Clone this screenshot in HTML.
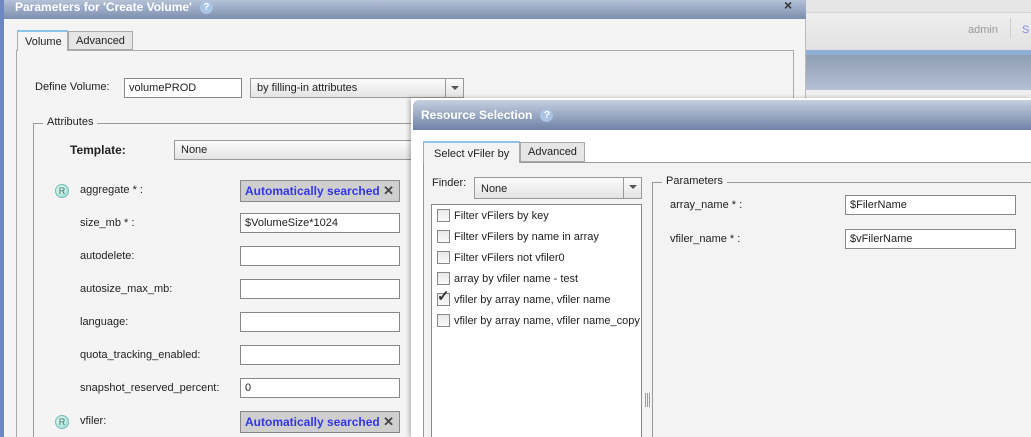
<!DOCTYPE html>
<html style="width:1031px;height:437px;overflow:hidden"><head><style>
*{margin:0;padding:0;box-sizing:border-box}
body{width:1031px;height:437px;overflow:hidden;position:relative;background:#f3f3f3;font-family:"Liberation Sans",sans-serif;font-size:11px;color:#222}
.a{position:absolute}
.inp{position:absolute;background:#fff;border:1px solid #888;height:20px;padding:2px 4px;font-size:11px;line-height:14px}
.sel{position:absolute;border:1px solid #999;height:20px;padding:3px 6px;background:linear-gradient(#fbfbfb,#e4e4e4);font-size:11px;line-height:13px}
.sel .ar{position:absolute;right:0;top:0;width:18px;height:18px;border-left:1px solid #999}
.sel .ar:after{content:"";position:absolute;left:5px;top:7px;border-left:4px solid transparent;border-right:4px solid transparent;border-top:4px solid #555}
.auto{position:absolute;background:#cfcfcf;border:1px solid #888;height:22px;width:160px;padding:3px 4px;font-weight:bold;color:#3535e8;font-size:12px}
.auto b{position:absolute;right:5px;top:2px;color:#444;font-size:13px}
.r{position:absolute;width:14px;height:14px;border-radius:50%;background:radial-gradient(circle at 40% 35%,#e8fff9,#8fd6c4);border:1px solid #7bb;font-size:9px;text-align:center;line-height:12px;color:#366}
.lbl{position:absolute;font-size:11px}
.cb{position:absolute;width:13px;height:13px;border:1px solid #888;background:linear-gradient(#e8e8e8,#fafafa)}
.help{display:inline-block;width:13px;height:13px;border-radius:50%;background:#a9c4e4;color:#fff;font-size:10px;text-align:center;line-height:13px;margin-left:8px;vertical-align:1px}
</style></head><body>
<div class="a" style="left:806px;top:0;width:225px;height:12px;background:#e6e6e6"></div>
<div class="a" style="left:806px;top:12px;width:225px;height:38px;background:linear-gradient(#eeeeee,#e2e2e2);border-top:1px solid #d6d6d6"></div>
<div class="a" style="left:968px;top:24px;color:#999;font-size:11px">admin</div>
<div class="a" style="left:1010px;top:18px;width:1px;height:20px;background:#ccc"></div>
<div class="a" style="left:1022px;top:24px;color:#8a8ae8;font-size:11px">S</div>
<div class="a" style="left:806px;top:50px;width:225px;height:5px;background:#8fb0d6"></div>
<div class="a" style="left:806px;top:55px;width:225px;height:35px;background:linear-gradient(#8f9db3,#b4c1d6)"></div>
<div class="a" style="left:806px;top:90px;width:225px;height:10px;background:#eeeeee"></div>
<div class="a" style="left:0;top:0;width:806px;height:437px;background:#f4f4f4;border-right:1px solid #bbb"></div>
<div class="a" style="left:0;top:0;width:4px;height:437px;background:#6d86c4"></div>
<div class="a" style="left:4px;top:0;width:802px;height:19px;background:linear-gradient(#b4c1d6,#7d8fb0);color:#fff;font-weight:bold;font-size:12px;padding:0 0 0 11px;line-height:14px">Parameters for 'Create Volume'<span class="help">?</span></div>
<div class="a" style="left:784px;top:-3px;color:#333;font-size:14px;font-weight:bold">×</div>
<div class="a" style="left:16px;top:50px;width:778px;height:387px;border:1px solid #aaa;border-bottom:none"></div>
<div class="a" style="left:17px;top:30px;width:51px;height:21px;background:#f4f4f4;border:1px solid #aaa;border-bottom:none;border-top:2px solid #8cc4ea;padding:4px 0 0 7px">Volume</div>
<div class="a" style="left:68px;top:31px;width:65px;height:19px;background:#e6e6e6;border:1px solid #aaa;padding:3px 0 0 7px">Advanced</div>
<div class="lbl" style="left:35px;top:81px">Define Volume:</div>
<div class="inp" style="left:124px;top:78px;width:118px">volumePROD</div>
<div class="sel" style="left:250px;top:78px;width:214px">by filling-in attributes<span class="ar"></span></div>
<div class="a" style="left:33px;top:123px;width:780px;height:314px;border:1px solid #999;border-bottom:none"></div>
<div class="a" style="left:43px;top:116px;background:#f4f4f4;padding:0 4px;font-size:11px">Attributes</div>
<div class="lbl" style="left:70px;top:143px;font-weight:bold;font-size:12px">Template:</div>
<div class="sel" style="left:174px;top:140px;width:260px">None</div>
<div class="r" style="left:55px;top:184px">R</div>
<div class="lbl" style="left:80px;top:184px">aggregate * :</div>
<div class="auto" style="left:240px;top:180px">Automatically searched<b>✕</b></div>
<div class="lbl" style="left:80px;top:217px">size_mb * :</div>
<div class="inp" style="left:240px;top:213px;width:160px">$VolumeSize*1024</div>
<div class="lbl" style="left:80px;top:250px">autodelete:</div>
<div class="inp" style="left:240px;top:246px;width:160px"></div>
<div class="lbl" style="left:80px;top:283px">autosize_max_mb:</div>
<div class="inp" style="left:240px;top:279px;width:160px"></div>
<div class="lbl" style="left:80px;top:316px">language:</div>
<div class="inp" style="left:240px;top:312px;width:160px"></div>
<div class="lbl" style="left:80px;top:349px">quota_tracking_enabled:</div>
<div class="inp" style="left:240px;top:345px;width:160px"></div>
<div class="lbl" style="left:80px;top:382px">snapshot_reserved_percent:</div>
<div class="inp" style="left:240px;top:378px;width:160px">0</div>
<div class="r" style="left:55px;top:415px">R</div>
<div class="lbl" style="left:80px;top:415px">vfiler:</div>
<div class="auto" style="left:240px;top:411px">Automatically searched<b>✕</b></div>
<div class="a" style="left:411px;top:98px;width:620px;height:339px;background:#fff;box-shadow:-2px 0 4px rgba(0,0,0,.25)"></div>
<div class="a" style="left:413px;top:100px;width:618px;height:30px;background:linear-gradient(#c5cfe0,#6e82a8);border-radius:6px 0 0 0;color:#fff;font-weight:bold;font-size:12px;padding:8px 0 0 8px">Resource Selection<span class="help">?</span></div>
<div class="a" style="left:423px;top:162px;width:608px;height:275px;border:1px solid #999;border-right:none;border-bottom:none;background:#f3f3f3"></div>
<div class="a" style="left:423px;top:141px;width:97px;height:22px;background:#f3f3f3;border:1px solid #aaa;border-bottom:none;border-top:2px solid #8cc4ea;padding:5px 0 0 10px">Select vFiler by</div>
<div class="a" style="left:520px;top:142px;width:65px;height:20px;background:#e6e6e6;border:1px solid #aaa;padding:3px 0 0 7px">Advanced</div>
<div class="lbl" style="left:432px;top:177px">Finder:</div>
<div class="sel" style="left:474px;top:177px;width:168px;height:22px;padding-top:5px">None<span class="ar" style="height:20px"></span></div>
<div class="a" style="left:431px;top:204px;width:211px;height:233px;border:1px solid #888;border-bottom:none;background:#fff"></div>
<div class="cb" style="left:437px;top:209px"></div><div class="lbl" style="left:454px;top:210px">Filter vFilers by key</div>
<div class="cb" style="left:437px;top:230px"></div><div class="lbl" style="left:454px;top:231px">Filter vFilers by name in array</div>
<div class="cb" style="left:437px;top:251px"></div><div class="lbl" style="left:454px;top:252px">Filter vFilers not vfiler0</div>
<div class="cb" style="left:437px;top:272px"></div><div class="lbl" style="left:454px;top:273px">array by vfiler name - test</div>
<div class="cb" style="left:437px;top:293px"></div><div class="a" style="left:437px;top:287px;font-size:15px;font-weight:bold;color:#333">✓</div><div class="lbl" style="left:454px;top:294px">vfiler by array name, vfiler name</div>
<div class="cb" style="left:437px;top:314px"></div><div class="lbl" style="left:454px;top:315px">vfiler by array name, vfiler name_copy</div>
<div class="a" style="left:645px;top:393px;width:5px;height:14px;border-left:1px solid #999;border-right:1px solid #999"><div style="margin-left:1px;width:1px;height:14px;background:#999"></div></div>
<div class="a" style="left:652px;top:182px;width:379px;height:255px;border:1px solid #999;border-right:none;border-bottom:none"></div>
<div class="a" style="left:662px;top:175px;background:#f3f3f3;padding:0 4px">Parameters</div>
<div class="lbl" style="left:670px;top:199px">array_name * :</div>
<div class="inp" style="left:845px;top:195px;width:171px">$FilerName</div>
<div class="lbl" style="left:670px;top:233px">vfiler_name * :</div>
<div class="inp" style="left:845px;top:229px;width:171px">$vFilerName</div>
</body></html>
